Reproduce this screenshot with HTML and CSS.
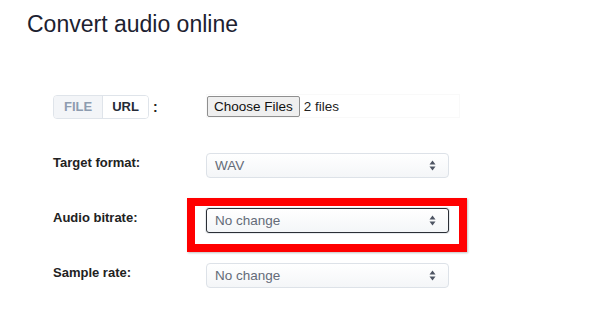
FILE: index.html
```html
<!DOCTYPE html>
<html lang="en">
<head>
	<meta charset="utf-8">
	<meta name="viewport" content="width=device-width, initial-scale=1">
	<title>Convert audio online</title>
	<link rel="stylesheet" href="styles.css">
</head>
<body>
<div class="page">
	<h1>Convert audio online</h1>

	<form class="converter">
		<div class="row row-source">
			<div class="label">
				<span class="toggle">
					<span class="toggle-item">FILE</span><span class="toggle-item active">URL</span>
				</span>
				<span class="colon">:</span>
			</div>
			<div class="field file-field">
				<button type="button" class="file-button">Choose Files</button>
				<span class="file-count">2 files</span>
			</div>
		</div>

		<div class="row">
			<label class="label">Target format:</label>
			<div class="field">
				<div class="select">
					<span>WAV</span>
					<svg class="arrows" width="7" height="11" viewBox="0 0 7 11"><path d="M3.5 0.5 L6.5 4.5 L0.5 4.5 Z M3.5 10.5 L6.5 6.5 L0.5 6.5 Z"/></svg>
				</div>
			</div>
		</div>

		<div class="row">
			<label class="label">Audio bitrate:</label>
			<div class="field">
				<div class="select focused">
					<span>No change</span>
					<svg class="arrows" width="7" height="11" viewBox="0 0 7 11"><path d="M3.5 0.5 L6.5 4.5 L0.5 4.5 Z M3.5 10.5 L6.5 6.5 L0.5 6.5 Z"/></svg>
				</div>
				<div class="highlight"></div>
			</div>
		</div>

		<div class="row">
			<label class="label">Sample rate:</label>
			<div class="field">
				<div class="select">
					<span>No change</span>
					<svg class="arrows" width="7" height="11" viewBox="0 0 7 11"><path d="M3.5 0.5 L6.5 4.5 L0.5 4.5 Z M3.5 10.5 L6.5 6.5 L0.5 6.5 Z"/></svg>
				</div>
			</div>
		</div>
	</form>
</div>
</body>
</html>
```

FILE: styles.css
```css
html,body
{
	padding: 0;
	border: 0;
	margin: 0;
}

body
{
	background: #fff;
	color: #1f2330;
	font-family: "Liberation Sans", Arial, sans-serif;
}

.page
{
	padding: 12px 0 0 27px;
}

h1
{
	margin: 0;
	font-size: 23px;
	font-weight: normal;
	line-height: 25px;
	color: #1c2130;
}

.converter
{
	display: flex;
	flex-direction: column;
	gap: 30px;
	margin-top: 58px;
	padding-left: 26px;
}

.row
{
	display: flex;
	align-items: flex-start;
}

.row-source
{
	margin-bottom: 4px;
	align-items: center;
}

.label
{
	display: flex;
	align-items: center;
	width: 153px;
	padding-top: 2px;
	font-size: 13px;
	font-weight: bold;
	line-height: 16px;
	color: #222;
}

.row-source .label
{
	padding-top: 0;
}

/* FILE / URL switch */
.toggle
{
	display: inline-flex;
	height: 22px;
	border: 1px solid #dfe4ea;
	border-radius: 4px;
	overflow: hidden;
}

.toggle-item
{
	display: flex;
	align-items: center;
	padding: 0 10px;
	background: #f3f5f8;
	color: #8d9cb0;
	font-size: 13px;
	font-weight: bold;
}

.toggle-item.active
{
	padding: 0 9px;
	border-left: 1px solid #dfe4ea;
	background: #fff;
	color: #252a36;
}

.colon
{
	margin-left: 4px;
	color: #222;
	font-size: 14px;
}

.field
{
	position: relative;
}

.file-field
{
	display: flex;
	align-items: center;
	width: 252px;
	height: 22px;
	border: 1px solid #f9f9f9;
	margin-top: -2px;
}

.file-button
{
	height: 21px;
	padding: 0 6px;
	border: 1px solid #8f8f8f;
	border-radius: 2px;
	background: #efefef;
	color: #111;
	font-family: "Liberation Sans", Arial, sans-serif;
	font-size: 13.5px;
}

.file-count
{
	margin-left: 4px;
	color: #222;
	font-size: 13.5px;
}

.select
{
	display: flex;
	align-items: center;
	justify-content: space-between;
	box-sizing: border-box;
	width: 243px;
	height: 25px;
	padding: 0 12px 0 8px;
	border: 1px solid #dde2e8;
	border-radius: 4px;
	background: linear-gradient(#fff, #f4f6f8);
	color: #646b78;
	font-size: 13.5px;
}

.select.focused
{
	border: 1.5px solid #2b2f36;
	border-radius: 3px;
	box-shadow: 0 0 0 1px #e9ecef;
}

.arrows
{
	fill: #4d5462;
}

/* annotation frame drawn over the field */
.highlight
{
	position: absolute;
	top: -10px;
	left: -19px;
	box-sizing: border-box;
	width: 280px;
	height: 54px;
	border: 8px solid #f00;
	box-shadow: 1px 1px 2px rgb(0 0 0 / 25%);
	pointer-events: none;
}
```
